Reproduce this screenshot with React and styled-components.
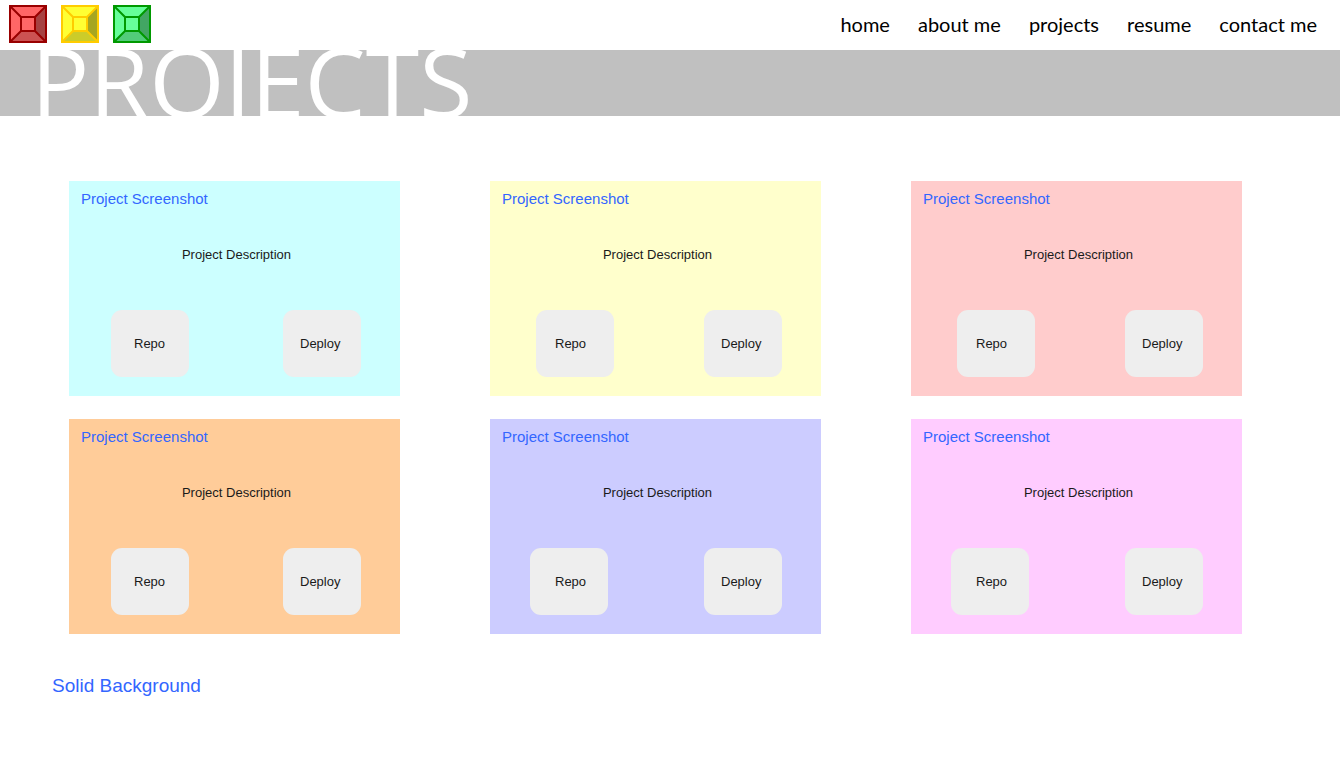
import React from "react";
import styled, { createGlobalStyle } from "styled-components";

const GlobalStyle = createGlobalStyle`
  *, *::before, *::after { box-sizing: border-box; }
  body {
    margin: 0;
    background: #ffffff;
    font-family: Arial, "Liberation Sans", sans-serif;
  }
`;

const Header = styled.header`
  display: flex;
  align-items: center;
  justify-content: space-between;
  height: 50px;
  padding: 0 23px 2px 9px;
`;

const Gems = styled.div`
  display: flex;
  gap: 14px;
`;

const GemIcon = styled.svg`
  display: block;
  width: 38px;
  height: 38px;
`;

const Nav = styled.nav`
  display: flex;
  gap: 28px;
`;

const NavLink = styled.a`
  color: #000000;
  font-family: Lato, sans-serif;
  font-size: 20px;
  line-height: 24px;
  text-decoration: none;
`;

const Banner = styled.div`
  height: 66px;
  padding-left: 31px;
  background: #c0c0c0;
`;

const Title = styled.h1`
  margin: 0;
  color: #ffffff;
  font-family: "Open Sans", sans-serif;
  font-size: 97px;
  font-weight: 400;
  line-height: 60px;
`;

const ProjectGrid = styled.section`
  display: grid;
  grid-template-columns: repeat(3, 1fr);
  gap: 23px 90px;
  padding: 65px 98px 0 69px;
`;

const Card = styled.article`
  height: 215px;
  padding-top: 8px;
  background: ${(p) => p.$color};
`;

const CardTitle = styled.h2`
  margin: 0 12px;
  color: #3366ff;
  font-size: 15px;
  font-weight: 400;
  line-height: 20px;
`;

const Description = styled.p`
  margin: 36px 8px 0 12px;
  color: #1a1a1a;
  font-size: 13px;
  line-height: 20px;
  text-align: center;
`;

const Actions = styled.div`
  display: flex;
  justify-content: space-between;
  margin-top: 45px;
  padding: 0 39px 0 ${(p) => p.$inset}px;
`;

const ActionButton = styled.button`
  width: 78px;
  height: 67px;
  padding: 0 0 0 ${(p) => p.$indent}px;
  border: 0;
  border-radius: 11px;
  background: #eeeeee;
  color: #1a1a1a;
  font-family: inherit;
  font-size: 13px;
  text-align: left;
`;

const Note = styled.p`
  margin: 40px 52px 0;
  color: #3366ff;
  font-size: 19px;
  line-height: 24px;
`;

const gems = [
  { name: "Red", face: "#ff6666", right: "#a64242", bottom: "#cc5252", line: "#990000" },
  { name: "Yellow", face: "#ffff33", right: "#a6a621", bottom: "#cccc29", line: "#ffcc00" },
  { name: "Green", face: "#66ff99", right: "#42a663", bottom: "#52cc7a", line: "#009900" },
];

const links = ["home", "about me", "projects", "resume", "contact me"];

const projects = [
  { color: "#ccffff", inset: 42, indent: 23 },
  { color: "#ffffcc", inset: 46, indent: 19 },
  { color: "#ffcccc", inset: 46, indent: 19 },
  { color: "#ffcc99", inset: 42, indent: 23 },
  { color: "#ccccff", inset: 40, indent: 25 },
  { color: "#ffccff", inset: 40, indent: 25 },
];

function Gem({ name, face, right, bottom, line }) {
  return (
    <GemIcon viewBox="0 0 38 38" role="img" aria-label={`${name} gem`}>
      <rect x="1" y="1" width="36" height="36" fill={face} />
      <path d="M37 1V37L26 26V12Z" fill={right} />
      <path d="M1 37H37L26 26H12Z" fill={bottom} />
      <path
        d="M1 1H37V37H1ZM12 12H26V26H12ZM1 1L12 12M37 1L26 12M37 37L26 26M1 37L12 26"
        fill="none"
        stroke={line}
        strokeWidth="2"
      />
    </GemIcon>
  );
}

export default function App() {
  return (
    <>
      <GlobalStyle />
      <Header>
        <Gems>
          {gems.map((gem) => (
            <Gem key={gem.name} {...gem} />
          ))}
        </Gems>
        <Nav>
          {links.map((label) => (
            <NavLink key={label} href={`#${label.replace(" ", "-")}`}>
              {label}
            </NavLink>
          ))}
        </Nav>
      </Header>
      <main>
        <Banner>
          <Title>PROJECTS</Title>
        </Banner>
        <ProjectGrid>
          {projects.map(({ color, inset, indent }) => (
            <Card key={color} $color={color}>
              <CardTitle>Project Screenshot</CardTitle>
              <Description>Project Description</Description>
              <Actions $inset={inset}>
                <ActionButton type="button" $indent={indent}>Repo</ActionButton>
                <ActionButton type="button" $indent={17}>Deploy</ActionButton>
              </Actions>
            </Card>
          ))}
        </ProjectGrid>
        <Note>Solid Background</Note>
      </main>
    </>
  );
}
